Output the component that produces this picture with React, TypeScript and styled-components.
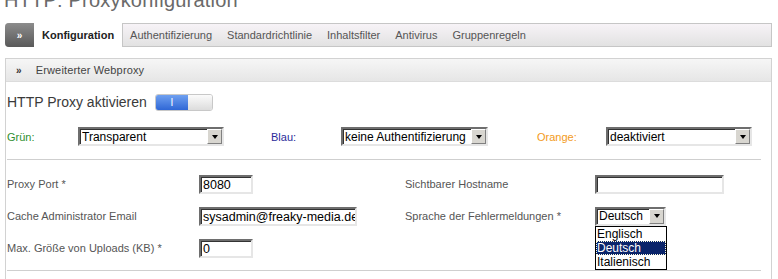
import { FC } from 'react'
import styled, { createGlobalStyle } from 'styled-components'

const Global = createGlobalStyle`
  html, body {
    margin: 0;
    padding: 0;
    background: #fff;
    overflow: hidden;
  }
  body {
    font-family: "Liberation Sans", Arial, sans-serif;
    font-size: 11px;
    color: #555;
  }
`

const Page = styled.div`
  width: 778px;
  height: 279px;
  overflow: hidden;
`

const Title = styled.h1`
  margin: -10px 0 0 4px;
  height: 23px;
  font-size: 20px;
  line-height: 20px;
  font-weight: normal;
  color: #6a6a6a;
  letter-spacing: 0.2px;
`

const TabBar = styled.div`
  margin: 10px 6px 0 5px;
  height: 22px;
  display: flex;
  align-items: stretch;
  border: 1px solid #c6c6c6;
  border-left: none;
  border-radius: 4px 0 0 4px;
  background: linear-gradient(#f7f3f7, #e2e2e2);
`

const TabToggle = styled.div`
  width: 29px;
  display: flex;
  align-items: center;
  justify-content: center;
  color: #fff;
  font-weight: bold;
  font-size: 10px;
  border-radius: 4px 0 0 4px;
  background: linear-gradient(#8c8c8c, #595959);
  margin: -1px 0;
`

const Tab = styled.div<{ $active?: boolean }>`
  display: flex;
  align-items: center;
  padding: 0 ${p => (p.$active ? '8px 0 8px' : '7px')};
  font-size: 11px;
  color: ${p => (p.$active ? '#222' : '#555')};
  font-weight: ${p => (p.$active ? 'bold' : 'normal')};
  background: ${p => (p.$active ? '#fff' : 'transparent')};
  border-right: 1px solid ${p => (p.$active ? '#c6c6c6' : 'transparent')};
  margin: ${p => (p.$active ? '-1px 0' : '0')};
`

const Panel = styled.div`
  margin: 11px 6px 0 5px;
  border: 1px solid #d2d2d2;
  border-bottom: none;
  height: 240px;
`

const PanelHead = styled.div`
  height: 22px;
  display: flex;
  align-items: center;
  gap: 14px;
  padding-left: 10px;
  background: linear-gradient(#f6f6f6, #e6e6e6);
  border-bottom: 1px solid #dcdcdc;
  color: #444;
  letter-spacing: 0.15px;
`

const Chevron = styled.span`
  font-weight: bold;
  font-size: 10px;
  color: #333;
`

const ActivateRow = styled.div`
  display: flex;
  align-items: center;
  gap: 8px;
  margin: 11px 0 0 1px;
  height: 18px;
`

const BigLabel = styled.span`
  font-size: 14px;
  color: #3a3a3a;
`

const Switch = styled.div`
  display: flex;
  width: 58px;
  height: 17px;
  border-radius: 3px;
  overflow: hidden;
  border: 1px solid #c8c8c8;
  box-sizing: border-box;
`

const SwitchOn = styled.div`
  flex: 0 0 32px;
  display: flex;
  align-items: center;
  justify-content: center;
  color: #fff;
  font-size: 10px;
  background: linear-gradient(#6fa0f0, #2f67d6);
`

const SwitchOff = styled.div`
  flex: 1;
  background: linear-gradient(#fbfbfb, #dcdcdc);
`

const ZoneRow = styled.div`
  display: grid;
  grid-template-columns: 264px 266px 1fr;
  margin: 16px 0 0 1px;
  padding-bottom: 13px;
  border-bottom: 1px solid #cfcfcf;
  width: 754px;
`

const Zone = styled.div`
  display: flex;
  align-items: center;
`

const ZoneLabel = styled.span<{ $color: string; $w: number }>`
  width: ${p => p.$w}px;
  color: ${p => p.$color};
  font-size: 11px;
`

const Select = styled.div<{ $w: number }>`
  width: ${p => p.$w}px;
  height: 19px;
  box-sizing: border-box;
  display: flex;
  align-items: center;
  background: #fff;
  border: 2px solid;
  border-color: #6e6e6e #e6e6e6 #e6e6e6 #6e6e6e;
  box-shadow: inset 1px 1px 0 #333;
  font-size: 12px;
  color: #000;
  padding-left: 2px;
`

const SelectText = styled.span`
  flex: 1;
  white-space: nowrap;
  overflow: hidden;
`

const SelectBtn = styled.span`
  width: 15px;
  height: 15px;
  box-sizing: border-box;
  background: #d8d6d0;
  border: 1px solid;
  border-color: #fff #808080 #808080 #fff;
  display: flex;
  align-items: center;
  justify-content: center;
  &::after {
    content: '';
    border-left: 3.5px solid transparent;
    border-right: 3.5px solid transparent;
    border-top: 4px solid #000;
  }
`

const Fields = styled.div`
  display: grid;
  grid-template-columns: 192px 206px 190px 1fr;
  grid-auto-rows: 32px;
  align-items: center;
  margin: 8px 0 0 1px;
  width: 754px;
  padding-bottom: 6px;
  border-bottom: 1px solid #cfcfcf;
`

const FieldLabel = styled.span`
  font-size: 11px;
  color: #555;
`

const Input = styled.div<{ $w: number }>`
  width: ${p => p.$w}px;
  height: 19px;
  box-sizing: border-box;
  background: #fff;
  border: 2px solid;
  border-color: #6e6e6e #e6e6e6 #e6e6e6 #6e6e6e;
  box-shadow: inset 1px 1px 0 #333;
  font-size: 12.5px;
  color: #000;
  padding: 1px 0 0 2px;
  white-space: nowrap;
  overflow: hidden;
  line-height: 14px;
`

const SelectWrap = styled.div`
  position: relative;
`

const DropList = styled.ul`
  position: absolute;
  top: 19px;
  left: 0;
  width: 72px;
  margin: 0;
  padding: 0;
  list-style: none;
  background: #fff;
  border: 1px solid #000;
  box-sizing: border-box;
  z-index: 2;
`

const DropItem = styled.li<{ $sel?: boolean }>`
  font-size: 12px;
  line-height: 14px;
  padding-left: 1px;
  color: ${p => (p.$sel ? '#fff' : '#000')};
  background: ${p => (p.$sel ? '#0a246a' : '#fff')};
  outline: ${p => (p.$sel ? '1px dotted #ffd' : 'none')};
  outline-offset: -1px;
`

const tabs = ['Authentifizierung', 'Standardrichtlinie', 'Inhaltsfilter', 'Antivirus', 'Gruppenregeln']

const App: FC = () => {
  return (
    <Page>
      <Global />
      <Title>HTTP: Proxykonfiguration</Title>
      <TabBar>
        <TabToggle>»</TabToggle>
        <Tab $active>Konfiguration</Tab>
        {tabs.map(t => (
          <Tab key={t}>{t}</Tab>
        ))}
      </TabBar>
      <Panel>
        <PanelHead>
          <Chevron>»</Chevron>
          Erweiterter Webproxy
        </PanelHead>
        <ActivateRow>
          <BigLabel>HTTP Proxy aktivieren</BigLabel>
          <Switch>
            <SwitchOn>I</SwitchOn>
            <SwitchOff />
          </Switch>
        </ActivateRow>
        <ZoneRow>
          <Zone>
            <ZoneLabel $color="#2f8f2f" $w={71}>Grün:</ZoneLabel>
            <Select $w={146}>
              <SelectText>Transparent</SelectText>
              <SelectBtn />
            </Select>
          </Zone>
          <Zone>
            <ZoneLabel $color="#2b2b9a" $w={70}>Blau:</ZoneLabel>
            <Select $w={147}>
              <SelectText>keine Authentifizierung</SelectText>
              <SelectBtn />
            </Select>
          </Zone>
          <Zone>
            <ZoneLabel $color="#f39a1a" $w={69}>Orange:</ZoneLabel>
            <Select $w={146}>
              <SelectText>deaktiviert</SelectText>
              <SelectBtn />
            </Select>
          </Zone>
        </ZoneRow>
        <Fields>
          <FieldLabel>Proxy Port *</FieldLabel>
          <Input $w={54}>8080</Input>
          <FieldLabel>Sichtbarer Hostname</FieldLabel>
          <Input $w={129} />

          <FieldLabel>Cache Administrator Email</FieldLabel>
          <Input $w={158}>sysadmin@freaky-media.de</Input>
          <FieldLabel>Sprache der Fehlermeldungen *</FieldLabel>
          <SelectWrap>
            <Select $w={71}>
              <SelectText>Deutsch</SelectText>
              <SelectBtn />
            </Select>
            <DropList>
              <DropItem>Englisch</DropItem>
              <DropItem $sel>Deutsch</DropItem>
              <DropItem>Italienisch</DropItem>
            </DropList>
          </SelectWrap>

          <FieldLabel>Max. Größe von Uploads (KB) *</FieldLabel>
          <Input $w={54}>0</Input>
          <span />
          <span />
        </Fields>
      </Panel>
    </Page>
  )
}

export default App
